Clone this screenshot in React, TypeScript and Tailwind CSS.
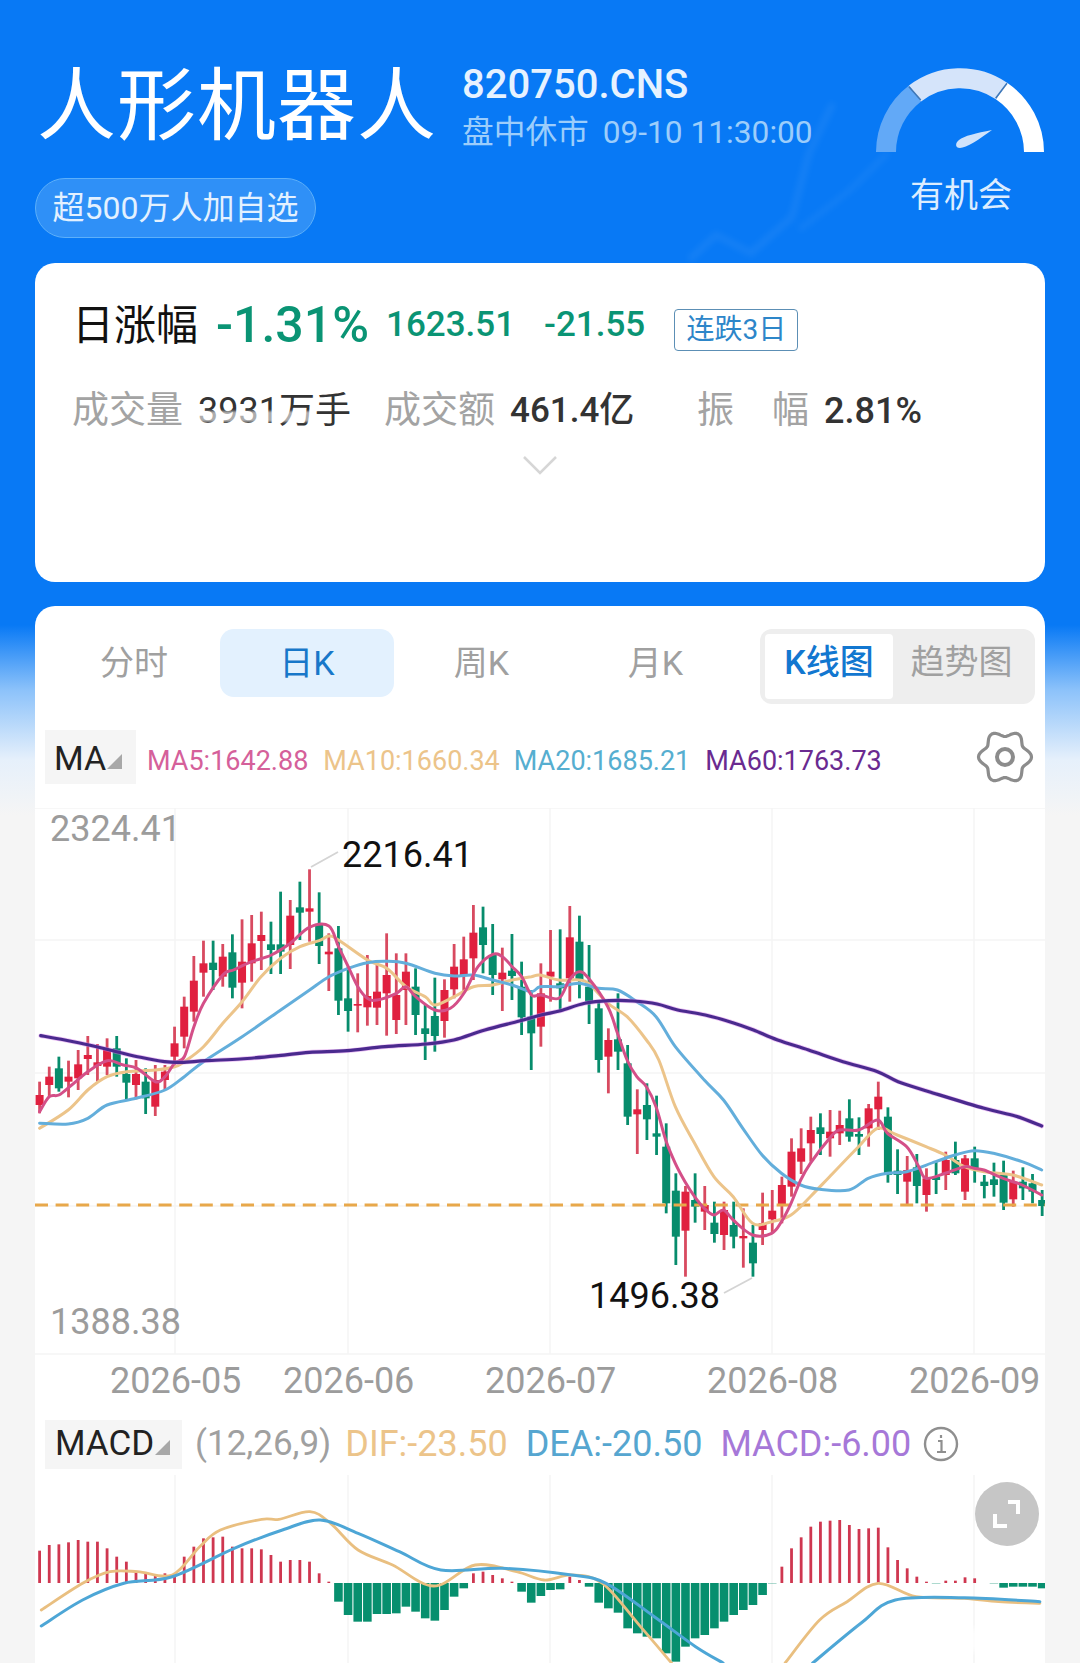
type Candle = [number, number, number, number, number];
type Point = [number, number];

const xOf = (i: number) => 39.6 + 9.64 * i;

// [up(1)/down(0), wick top, wick bottom, body top, body bottom], y in crop units
const leftCandles: Candle[] = [
  [1, 785, 880, 825, 855], [1, 740, 830, 770, 795], [0, 710, 815, 745, 805], [1, 722, 832, 770, 785],
  [1, 690, 810, 733, 775], [1, 648, 765, 705, 717], [1, 672, 785, 727, 738], [1, 655, 765, 690, 740],
  [0, 648, 770, 685, 740], [0, 715, 838, 762, 788], [1, 720, 838, 762, 795], [0, 745, 882, 785, 835],
  [1, 735, 888, 780, 860], [1, 735, 810, 755, 780], [1, 620, 735, 670, 710], [1, 530, 685, 560, 650],
  [1, 408, 605, 482, 575], [1, 362, 530, 430, 458], [0, 362, 510, 428, 450], [1, 372, 500, 410, 470],
  [0, 343, 535, 397, 503], [1, 298, 565, 425, 488], [1, 285, 485, 370, 430], [1, 275, 450, 345, 363],
  [0, 305, 462, 373, 390], [0, 215, 462, 373, 395], [1, 240, 447, 287, 375], [0, 185, 360, 262, 278],
  [1, 148, 365, 265, 275], [0, 217, 432, 315, 378], [1, 340, 513, 395, 403], [0, 318, 585, 385, 542],
  [0, 440, 635, 535, 573], [1, 460, 637, 552, 557], [1, 405, 617, 528, 562], [1, 432, 615, 515, 563],
  [1, 340, 647, 465, 520], [1, 400, 642, 525, 600], [1, 400, 615, 455, 510], [0, 445, 645, 500, 585],
  [0, 555, 720, 625, 642], [0, 473, 695, 588, 648], [1, 478, 653, 510, 603], [1, 372, 535, 440, 508],
  [1, 350, 515, 418, 465], [1, 255, 480, 338, 415], [0, 260, 460, 322, 375], [0, 312, 525, 405, 465],
  [1, 383, 573, 458, 478], [0, 342, 540, 452, 468], [0, 425, 645, 500, 592], [0, 510, 750, 590, 640],
];

const rightCandles: Candle[] = [
  [1, 250, 500, 340, 440], [1, 150, 365, 275, 290], [0, 148, 395, 310, 325], [1, 78, 365, 172, 295],
  [0, 107, 355, 185, 300], [0, 195, 432, 320, 365], [0, 365, 578, 385, 540], [1, 445, 640, 480, 530],
  [0, 340, 570, 478, 515], [0, 495, 735, 550, 710], [1, 628, 822, 688, 703], [0, 610, 780, 675, 718],
  [0, 647, 825, 760, 770], [0, 730, 1000, 800, 970], [0, 880, 1155, 932, 1070], [1, 918, 1190, 935, 1052],
  [0, 880, 1028, 960, 980], [1, 918, 1050, 975, 995], [0, 965, 1088, 1028, 1062], [1, 965, 1110, 990, 1065],
  [0, 965, 1105, 1035, 1070], [1, 985, 1163, 1068, 1075], [0, 1035, 1190, 1088, 1150], [1, 938, 1095, 1030, 1050],
  [1, 930, 1060, 992, 1018], [1, 890, 1030, 915, 975], [1, 775, 950, 815, 920], [1, 745, 882, 805, 845],
  [1, 710, 845, 750, 790], [0, 700, 825, 742, 762], [1, 690, 830, 755, 775], [1, 692, 795, 735, 760],
  [0, 658, 785, 715, 770], [0, 712, 825, 762, 770], [1, 672, 800, 685, 745], [1, 605, 750, 650, 688],
  [0, 682, 908, 710, 885], [0, 808, 942, 872, 885], [1, 828, 975, 870, 905], [0, 822, 970, 862, 918],
  [1, 865, 995, 895, 945], [0, 845, 942, 890, 900], [1, 815, 930, 840, 885], [0, 785, 885, 840, 880],
  [1, 825, 960, 835, 935], [0, 800, 908, 835, 865], [0, 885, 955, 905, 918], [0, 848, 950, 898, 915],
  [0, 842, 990, 885, 968], [1, 872, 980, 905, 958], [0, 862, 960, 905, 925], [0, 882, 970, 910, 935],
  [0, 930, 1008, 960, 978],
];

const candles = [
  ...leftCandles.map((c) => [c[0], 820 + c[1] / 3, 820 + c[2] / 3, 820 + c[3] / 3, 820 + c[4] / 3]),
  ...rightCandles.map((c) => [c[0], 880 + c[1] / 3, 880 + c[2] / 3, 880 + c[3] / 3, 880 + c[4] / 3]),
];

// catmull-rom through the points so the averages don't look like polylines
const smooth = (pts: number[][]) => {
  let d = `M${pts[0][0].toFixed(1)} ${pts[0][1].toFixed(1)}`;
  for (let i = 0; i < pts.length - 1; i++) {
    const p0 = pts[Math.max(i - 1, 0)];
    const p1 = pts[i];
    const p2 = pts[i + 1];
    const p3 = pts[Math.min(i + 2, pts.length - 1)];
    const c1x = p1[0] + (p2[0] - p0[0]) / 6;
    const c1y = p1[1] + (p2[1] - p0[1]) / 6;
    const c2x = p2[0] - (p3[0] - p1[0]) / 6;
    const c2y = p2[1] - (p3[1] - p1[1]) / 6;
    d += `C${c1x.toFixed(1)} ${c1y.toFixed(1)} ${c2x.toFixed(1)} ${c2y.toFixed(1)} ${p2[0].toFixed(1)} ${p2[1].toFixed(1)}`;
  }
  return d;
};

const joinLine = (a: Point[], b: Point[]) => {
  const left = a.map(([x, y]) => [20 + x / 2.904, 820 + y / 3]);
  const right = b.map(([x, y]) => [540 + x / 2.904, 880 + y / 3]);
  return smooth([...left.filter(([x]) => x < right[0][0]), ...right]);
};

const ma60 = joinLine(
  [[60, 647], [130, 660], [200, 675], [280, 695], [350, 712], [420, 725], [470, 727], [540, 722], [640, 717], [750, 707], [840, 697], [950, 692], [1060, 680], [1180, 672], [1260, 660], [1350, 630], [1450, 603], [1568, 575]],
  [[3, 405], [60, 392], [130, 370], [200, 362], [270, 363], [340, 372], [400, 390], [480, 405], [560, 428], [620, 450], [690, 480], [780, 510], [880, 545], [980, 575], [1040, 605], [1130, 635], [1290, 685], [1380, 708], [1457, 738]],
);
const ma5 = joinLine(
  [[57, 875], [85, 830], [113, 825], [150, 795], [197, 755], [253, 722], [300, 735], [340, 745], [393, 785], [421, 770], [449, 730], [477, 710], [505, 620], [533, 550], [589, 465], [620, 450], [673, 425], [730, 405], [785, 370], [840, 322], [897, 318], [925, 380], [953, 440], [981, 500], [1009, 535], [1037, 540], [1093, 520], [1121, 500], [1149, 530], [1205, 570], [1250, 565], [1289, 520], [1330, 440], [1373, 403], [1401, 410], [1429, 440], [1457, 470], [1485, 525]],
  [[3, 345], [55, 355], [85, 300], [113, 275], [141, 295], [197, 380], [225, 460], [253, 540], [281, 590], [309, 620], [337, 680], [365, 780], [393, 850], [421, 905], [449, 950], [477, 985], [505, 1005], [533, 990], [561, 1020], [617, 1065], [673, 1060], [701, 1025], [729, 970], [757, 900], [785, 850], [841, 775], [869, 750], [925, 750], [981, 720], [1009, 760], [1065, 800], [1100, 860], [1121, 895], [1177, 880], [1233, 860], [1260, 865], [1289, 870], [1345, 895], [1400, 915], [1457, 945]],
);
const ma10 = joinLine(
  [[57, 925], [140, 870], [197, 810], [253, 770], [310, 755], [393, 750], [449, 740], [477, 725], [533, 680], [589, 610], [645, 545], [700, 470], [757, 415], [813, 380], [869, 362], [897, 348], [925, 360], [1009, 420], [1065, 445], [1121, 500], [1177, 530], [1205, 555], [1261, 530], [1317, 500], [1373, 495], [1429, 480], [1485, 470]],
  [[0, 285], [55, 300], [113, 300], [141, 310], [197, 370], [253, 410], [309, 480], [345, 540], [393, 680], [449, 790], [505, 890], [561, 950], [617, 1030], [673, 1025], [729, 1005], [785, 950], [841, 890], [925, 800], [981, 745], [1037, 765], [1121, 800], [1177, 825], [1233, 860], [1289, 875], [1373, 885], [1457, 915]],
);
const ma20 = joinLine(
  [[57, 910], [140, 912], [197, 895], [253, 855], [337, 835], [421, 810], [477, 770], [533, 725], [645, 650], [757, 570], [841, 510], [897, 470], [953, 445], [1009, 428], [1065, 424], [1121, 430], [1205, 460], [1261, 468], [1317, 465], [1373, 480], [1429, 495], [1485, 515]],
  [[0, 320], [55, 320], [113, 310], [169, 325], [225, 330], [281, 365], [337, 410], [393, 500], [477, 600], [533, 660], [589, 745], [645, 825], [701, 880], [757, 915], [813, 928], [897, 930], [953, 895], [1009, 880], [1065, 875], [1149, 845], [1205, 825], [1261, 812], [1317, 820], [1400, 845], [1457, 870]],
);

// MACD bar ends, crop units, baseline 848
const macdBars = [
  752, 735, 733, 727, 720, 725, 725, 745, 770, 785, 815, 818, 825, 820, 822, 770, 740, 715, 712, 710, 740, 745, 745, 748, 765, 785, 780, 780, 785, 820, 845,
  905, 945, 965, 965, 942, 942, 940, 920, 935, 955, 962, 930, 890, 865, 820, 815, 825, 835, 845, 875, 908, 888, 870, 868, 830, 840, 860, 908, 925, 938,
  985, 1000, 1010, 1015, 1060, 1085, 1040, 1015, 1005, 985, 965, 945, 930, 915, 885, 850, 800, 745, 712, 680, 665, 662, 660, 675, 687, 685, 683, 742, 780,
  805, 830, 845, 850, 842, 842, 832, 835, 848, 850, 863, 860, 860, 860, 865,
];

const macdLine = (pts: Point[]) => smooth(pts.map(([x, y]) => [x / 1.452, 1300 + y / 3]));

const dif = [
  macdLine([[60, 930], [120, 850], [160, 815], [200, 815], [250, 825], [290, 740], [320, 690], [380, 658], [405, 658], [450, 635], [480, 670], [520, 750], [570, 795], [630, 858], [690, 795], [750, 815], [790, 840], [830, 825], [875, 850], [930, 980], [975, 1089]]),
  macdLine([[1140, 1089], [1190, 960], [1230, 905], [1275, 850], [1330, 890], [1400, 895], [1450, 905], [1510, 910]]),
];
const dea = [
  macdLine([[60, 978], [120, 900], [180, 850], [250, 830], [340, 745], [410, 690], [465, 660], [520, 700], [580, 755], [640, 810], [730, 805], [830, 825], [880, 850], [950, 950], [1010, 1040], [1050, 1089]]),
  macdLine([[1180, 1089], [1250, 970], [1300, 900], [1400, 893], [1510, 905]]),
];

const gridX = [175, 348, 550, 772, 974];

// six soft lobes, dips at top and bottom
const gearOutline = Array.from({ length: 96 }, (_, i) => {
  const t = (i / 96) * Math.PI * 2;
  const r = 23.5 + 3 * Math.cos(6 * t);
  return `${(30 + r * Math.cos(t)).toFixed(1)},${(30 + r * Math.sin(t)).toFixed(1)}`;
}).join(" ");

const Corner = () => (
  <svg width="15" height="15" viewBox="0 0 15 15" className="mt-[6px] shrink-0">
    <polygon points="15,0 15,15 0,15" fill="#a8a8a8" />
  </svg>
);

const Gauge = () => (
  <svg width="170" height="92" viewBox="0 0 170 92" fill="none">
    <path d="M10 87A74 74 0 0 1 39 28.5" stroke="#62a9f7" strokeWidth="20" />
    <path d="M39 28.5A74 74 0 0 1 125.5 26" stroke="#d5e4fa" strokeWidth="20" />
    <path d="M125.5 26A74 74 0 0 1 158 87" stroke="#ffffff" strokeWidth="20" />
    <path d="M33 21.7L44.7 35M131 18.3L119.7 33.3" stroke="#3f78b8" strokeWidth="1.6" />
    <path d="M116 65C100 68 88 71 83 75C79 78 79 83 84 83C90 83 104 74 116 65Z" fill="#cfe2fb" />
  </svg>
);

const PriceChart = () => (
  <div className="relative h-[547px]">
    <svg width="1011" height="547" viewBox="35 808 1011 547" className="block">
      {[808, 940, 1073, 1206, 1354].map((y) => (
        <line key={y} x1="35" x2="1046" y1={y} y2={y} stroke="#f4f4f4" strokeWidth="1.5" />
      ))}
      {gridX.map((x) => (
        <line key={x} x1={x} x2={x} y1="808" y2="1354" stroke="#f4f4f4" strokeWidth="1.5" />
      ))}
      {candles.map((c, i) => (
        <g key={i} fill={c[0] ? "#e0203f" : "#078c6c"}>
          <rect x={xOf(i) - 1.4} y={c[1]} width="2.8" height={c[2] - c[1]} fill={c[0] ? "#d84a60" : "#078c6c"} />
          <rect x={xOf(i) - 4} y={c[3]} width="8" height={c[4] - c[3]} />
        </g>
      ))}
      <line x1="35" x2="1046" y1="1205" y2="1205" stroke="#e8a84a" strokeWidth="3" strokeDasharray="13 7.6" />
      <g fill="none" strokeLinejoin="round" strokeLinecap="round">
        <path d={ma10} stroke="#ecc48a" strokeWidth="3" />
        <path d={ma20} stroke="#63aedb" strokeWidth="3" />
        <path d={ma5} stroke="#d44f88" strokeWidth="3" />
        <path d={ma60} stroke="#d982ec" strokeWidth="4.6" opacity="0.5" />
        <path d={ma60} stroke="#4a2a8e" strokeWidth="3.2" />
      </g>
      <line x1="311" y1="867" x2="338" y2="852" stroke="#d4d4d4" strokeWidth="1.8" />
      <line x1="724" y1="1293" x2="752" y2="1278" stroke="#d4d4d4" strokeWidth="1.8" />
    </svg>
    <span className="absolute left-[15px] top-[1px] text-[36px] leading-[40px] text-[#9c9c9c]">2324.41</span>
    <span className="absolute left-[307px] top-[27px] text-[36px] leading-[40px] text-[#111]">2216.41</span>
    <span className="absolute left-[554px] top-[468px] text-[36px] leading-[40px] text-[#111]">1496.38</span>
    <span className="absolute left-[15px] top-[494px] text-[36px] leading-[40px] text-[#9c9c9c]">1388.38</span>
  </div>
);

const MacdChart = () => (
  <svg width="1011" height="188" viewBox="35 1475 1011 188" className="block">
    {gridX.map((x) => (
      <line key={x} x1={x} x2={x} y1="1475" y2="1663" stroke="#f4f4f4" strokeWidth="1.5" />
    ))}
    {macdBars.map((end, i) => {
      const y = 1300 + end / 3;
      return end < 848 ? (
        <rect key={i} x={xOf(i) - 1.4} y={y} width="2.8" height={1583 - y} fill="#cf3750" />
      ) : (
        <rect key={i} x={xOf(i) - 4.3} y={1583} width="8.6" height={y - 1583} fill="#078f6e" />
      );
    })}
    <g fill="none" strokeLinejoin="round" strokeLinecap="round">
      {dif.map((d) => (
        <path key={d} d={d} stroke="#e9bf80" strokeWidth="2.8" />
      ))}
      {dea.map((d) => (
        <path key={d} d={d} stroke="#4da6d6" strokeWidth="3" />
      ))}
    </g>
  </svg>
);

const App = () => {
  return (
    <div className="relative flex h-[1663px] w-[1080px] flex-col overflow-hidden bg-[linear-gradient(#0879f5_0,#0879f5_625px,#8cc2fa_690px,#e6f0fb_760px,#f5f5f5_815px)] px-[35px] [font-family:Roboto,'Noto_Sans_CJK_SC',sans-serif]">
      <svg width="400" height="200" viewBox="680 80 400 200" fill="none" className="absolute left-[680px] top-[80px] blur-[3px]">
        <path d="M689 260L716 235L751 253L792 217L809 153L833 103" stroke="#ffffff" strokeOpacity="0.06" strokeWidth="7" />
        <path d="M799 230L850 190L888 153" stroke="#ffffff" strokeOpacity="0.05" strokeWidth="6" />
      </svg>

      <header className="relative flex h-[263px] shrink-0 justify-between">
        <div className="flex flex-col">
          <div className="flex">
            <h1 className="mt-[61px] ml-[2px] w-[425px] text-[79px] leading-[92px] tracking-[1px] text-white">人形机器人</h1>
            <div className="flex flex-col pt-[63px]">
              <span className="text-[40px] leading-[44px] font-medium text-[#e6f2ff]">820750.CNS</span>
              <span className="mt-[6px] text-[31.7px] leading-[40px] text-[#9ccdfb]">盘中休市 <span className="ml-[6px]">09-10 11:30:00</span></span>
            </div>
          </div>
          <div className="mt-[25px] flex h-[60px] w-[281px] items-center justify-center rounded-[30px] border border-[#5db0fa] bg-[#2f90f7] text-[32px] text-[#e3f1ff]">超500万人加自选</div>
        </div>
        <div className="mr-[-1px] flex w-[170px] flex-col items-center pt-[65px]">
          <Gauge />
          <span className="mt-[16px] text-[34px] leading-[44px] text-[#dcedff]">有机会</span>
        </div>
      </header>

      <section className="relative flex h-[319px] shrink-0 flex-col rounded-[20px] bg-white pl-[37px] pr-[38px]">
        <div className="mt-[34px] flex h-[56px] items-center">
          <span className="whitespace-nowrap text-[42px] text-[#111]">日涨幅</span>
          <span className="ml-[18px] text-[50px] font-medium text-[#0a9474]">-1.31%</span>
          <span className="ml-[17px] text-[35px] font-medium text-[#0a9474]">1623.51</span>
          <span className="ml-[29px] text-[35px] font-medium text-[#0a9474]">-21.55</span>
          <span className="ml-[29px] mt-[10px] flex h-[42px] w-[124px] items-center justify-center rounded-[4px] border border-[#5c8fb5] text-[28px] text-[#2d86c9]">连跌3日</span>
        </div>
        <div className="mt-[34px] flex h-[48px] items-center text-[37px]">
          <span className="w-[108px] whitespace-nowrap text-[#a3a3a3]">成交量</span>
          <span className="ml-[18px] w-[162px] whitespace-nowrap text-[36px] text-[#333]">3931万手</span>
          <span className="ml-[24px] w-[111px] whitespace-nowrap text-[#a3a3a3]">成交额</span>
          <span className="ml-[15px] w-[122px] whitespace-nowrap text-[35px] font-medium text-[#333]">461.4亿</span>
          <span className="ml-[65px] w-[37px] text-[#a3a3a3]">振</span>
          <span className="ml-[38px] w-[37px] text-[#a3a3a3]">幅</span>
          <span className="ml-[15px] text-[36px] font-medium text-[#333]">2.81%</span>
        </div>
        <svg width="36" height="20" viewBox="0 0 36 20" fill="none" className="mt-[20px] self-center">
          <path d="M2 2L18 18L34 2" stroke="#d6d6d6" strokeWidth="2.5" />
        </svg>
        <div className="absolute left-[155px] top-[148px] h-[11px] w-[125px] bg-white/60 blur-[1px]" />
      </section>

      <section className="relative mt-[24px] flex-1 overflow-hidden rounded-t-[20px] bg-white">
        <div className="mt-[23px] flex h-[72px] items-start text-[34px] text-[#a0a0a0]">
          <span className="flex h-[68px] w-[185px] items-center justify-center pl-[13px]">分时</span>
          <span className="flex h-[68px] w-[174px] items-center justify-center rounded-[14px] bg-[#e3f1fe] text-[#1877c9]">日K</span>
          <span className="flex h-[68px] w-[175px] items-center justify-center">周K</span>
          <span className="flex h-[68px] w-[191px] items-center justify-center pr-[18px]">月K</span>
          <div className="flex h-[75px] w-[275px] rounded-[12px] bg-[#eeeeee] p-[5px] leading-[56px]">
            <span className="flex w-[128px] justify-center rounded-[4px] bg-white font-medium text-[#1277d0]">K线图</span>
            <span className="flex flex-1 justify-center">趋势图</span>
          </div>
        </div>
        <div className="mt-[28px] flex h-[56px] items-center pl-[10px] text-[27px]">
          <span className="flex h-[54px] w-[91px] items-center gap-[1px] bg-[#f5f5f5] pl-[9px] pt-[3px] text-[34px] text-[#222]">MA<Corner /></span>
          <span className="ml-[11px] mt-[9px] text-[#d5609a]">MA5:1642.88</span>
          <span className="ml-[15px] mt-[9px] text-[#ecc48a]">MA10:1660.34</span>
          <span className="ml-[14px] mt-[9px] text-[#56aed0]">MA20:1685.21</span>
          <span className="ml-[15px] mt-[9px] text-[#6a2a90]">MA60:1763.73</span>
          <svg width="60" height="60" viewBox="0 0 60 60" fill="none" className="ml-auto mr-[10px] -mt-[1px]">
            <polygon points={gearOutline} stroke="#8c8c8c" strokeWidth="3.2" strokeLinejoin="round" />
            <circle cx="30" cy="30" r="8" stroke="#8c8c8c" strokeWidth="4" />
          </svg>
        </div>
        <div className="mt-[23px]"><PriceChart /></div>
        <div className="flex h-[50px] items-center pt-[2px] text-[36px] text-[#9c9c9c]">
          <span className="ml-[75px] w-[173px]">2026-05</span>
          <span className="w-[202px]">2026-06</span>
          <span className="w-[222px]">2026-07</span>
          <span className="w-[202px]">2026-08</span>
          <span>2026-09</span>
        </div>
        <div className="flex h-[70px] items-center pl-[10px] pt-[8px] text-[36px]">
          <span className="flex h-[49px] w-[137px] items-center gap-[1px] bg-[#f5f5f5] pl-[10px] text-[35px] text-[#222]">MACD<Corner /></span>
          <span className="ml-[13px] text-[35px] text-[#a0a0a0]">(12,26,9)</span>
          <span className="ml-[14px] text-[#ecc48a]">DIF:-23.50</span>
          <span className="ml-[18px] text-[#56a6d0]">DEA:-20.50</span>
          <span className="ml-[18px] text-[#a678d8]">MACD:-6.00</span>
          <svg width="36" height="36" viewBox="0 0 36 36" fill="none" className="ml-[12px]">
            <circle cx="18" cy="18" r="16" stroke="#8f8f8f" strokeWidth="2.4" />
            <path d="M15 15h3.5v11M14 26h9M18 9v3" stroke="#8f8f8f" strokeWidth="2.2" />
          </svg>
        </div>
        <MacdChart />
        <div className="absolute left-[940px] top-[876px] flex h-[64px] w-[64px] items-center justify-center rounded-full bg-[#c6c6c6]">
          <svg width="32" height="32" viewBox="0 0 32 32" fill="none">
            <path d="M17 4H27V16M4 16V28H16" stroke="#ffffff" strokeWidth="4" />
          </svg>
        </div>
        <div className="absolute left-[825px] top-[1022px] h-[24px] w-[190px] bg-white/70 blur-[3px]" />
      </section>
    </div>
  );
};

export default App;
